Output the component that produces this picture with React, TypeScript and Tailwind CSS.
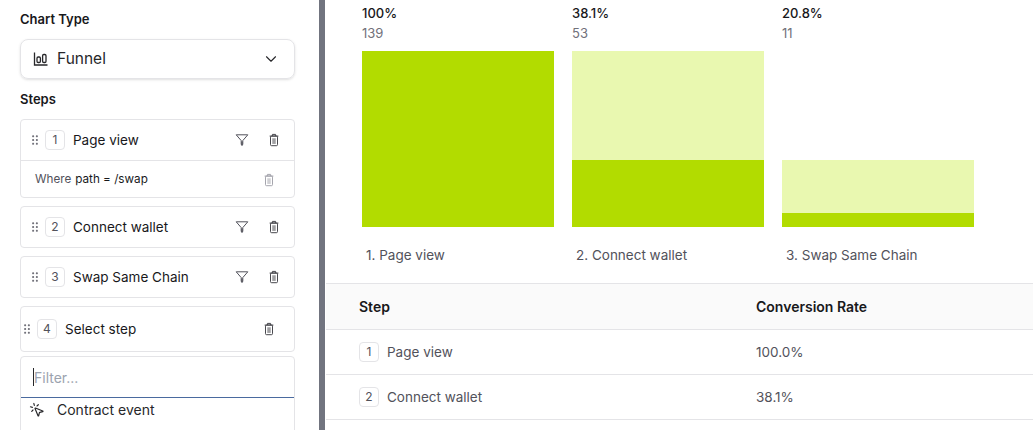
import { ChevronDown, MousePointerClick } from 'lucide-react';
import { RxDragHandleDots2 } from 'react-icons/rx';

const bars = [
  { percent: '100%', count: '139', label: '1. Page view', empty: 0, light: 0, solid: 176 },
  { percent: '38.1%', count: '53', label: '2. Connect wallet', empty: 0, light: 109, solid: 67 },
  { percent: '20.8%', count: '11', label: '3. Swap Same Chain', empty: 109, light: 53, solid: 14 },
];

function TrashIcon({ className }: { className: string }) {
  return (
    <svg viewBox="0 0 14 16" className={className} fill="none" stroke="currentColor" strokeWidth="1.1">
      <path d="M2 3.5h10M5.2 3.3V1.6h3.6v1.7" />
      <rect x="3" y="3.5" width="8" height="11" rx="1.2" />
      <rect x="5" y="6" width="4" height="6.5" fill="currentColor" stroke="none" opacity="0.5" />
    </svg>
  );
}

function FilterIcon() {
  return (
    <svg viewBox="0 0 14 14" className="ml-auto h-3.5 w-3.5 text-[#52525b]" fill="none" stroke="currentColor" strokeWidth="1">
      <path d="M1.2 1.8h11.6L7.8 7.6v3.6L7 12.6 6.2 11.2V7.6z" strokeLinejoin="round" />
      <path d="M7 8.5v3.5" strokeWidth="1.4" />
    </svg>
  );
}

function StepNumber({ n }: { n: number }) {
  return (
    <span className="flex h-5 w-5 shrink-0 items-center justify-center rounded border border-[#e4e4e7] text-xs text-[#52525b]">
      {n}
    </span>
  );
}

function StepRow({ n, name }: { n: number; name: string }) {
  return (
    <div className="flex h-10 items-center pl-[7px] pr-[13px]">
      <RxDragHandleDots2 className="h-3.5 w-3.5 text-[#71717a]" />
      <div className="ml-[3px]"><StepNumber n={n} /></div>
      <span className="ml-2 text-[13.5px] text-[#18181b]">{name}</span>
      <FilterIcon />
      <TrashIcon className="ml-[18px] h-3.5 w-3.5 text-[#3f3f46]" />
    </div>
  );
}

export default function App() {
  return (
    <div className="flex h-[430px] w-[1033px] overflow-hidden bg-white font-['Inter','Liberation_Sans',sans-serif]">
      <aside className="w-[319px] shrink-0 px-5 pt-[11px]">
        <h3 className="text-[13px] leading-4 font-semibold text-[#18181b]">Chart Type</h3>
        <div className="mt-3 flex h-10 w-[275px] items-center rounded-lg border border-[#e4e4e7] pl-[12px] pr-[14px] shadow-sm">
          <svg viewBox="0 0 16 16" className="h-4 w-4 text-[#27272a]" fill="none" stroke="currentColor" strokeWidth="1.3">
            <path d="M1.5 1.5v12.5h13" />
            <rect x="4" y="6" width="3.4" height="5.5" rx="1.2" />
            <rect x="9.6" y="3.5" width="3.4" height="8" rx="1.2" />
          </svg>
          <span className="ml-2 text-[15.5px] text-[#27272a]">Funnel</span>
          <ChevronDown className="ml-auto h-[18px] w-[18px] text-[#27272a]" strokeWidth={1.5} />
        </div>

        <h3 className="mt-3 text-[13px] leading-4 font-semibold text-[#18181b]">Steps</h3>
        <div className="mt-3 flex w-[275px] flex-col">
          <div className="rounded border border-[#e4e4e7]">
            <StepRow n={1} name="Page view" />
            <div className="flex h-[37px] items-center border-t border-[#e4e4e7] pl-[14px] pr-[18px] pt-px text-[11.7px]">
              <span className="text-[#52525b]">Where</span>
              <span className="ml-1 text-[#18181b]">path = /swap</span>
              <TrashIcon className="ml-auto h-3.5 w-3.5 text-[#a1a1aa]" />
            </div>
          </div>
          <div className="mt-2 rounded border border-[#e4e4e7]"><StepRow n={2} name="Connect wallet" /></div>
          <div className="mt-2 rounded border border-[#e4e4e7]"><StepRow n={3} name="Swap Same Chain" /></div>
          <div className="mt-2 flex h-[46px] items-center rounded border border-[#e4e4e7] pr-[18px]">
            <RxDragHandleDots2 className="-ml-px h-3.5 w-3.5 text-[#71717a]" />
            <div className="ml-[3px]"><StepNumber n={4} /></div>
            <span className="ml-2 text-[13.5px] text-[#18181b]">Select step</span>
            <TrashIcon className="ml-auto h-3.5 w-3.5 text-[#3f3f46]" />
          </div>
          <div className="mt-1 h-[90px] rounded border border-[#e4e4e7]">
            <div className="flex h-[41px] items-center border-b border-[#4a6a9f] pl-3 text-sm">
              <span className="h-[18px] w-px bg-[#27272a]" />
              <span className="pt-0.5 text-[#9ca3af]">Filter...</span>
            </div>
            <div className="flex h-6 items-center pl-[8px] text-sm text-[#27272a]">
              <MousePointerClick className="h-4 w-4" strokeWidth={1.75} />
              <span className="ml-[12px]">Contract event</span>
            </div>
          </div>
        </div>
      </aside>

      <div className="w-1.5 shrink-0 bg-[#71747f]" />

      <main className="ml-px min-w-0 flex-1">
        <div className="flex h-[283px] gap-[18px] pl-9 pt-[5px]">
          {bars.map((bar) => (
            <div key={bar.label} className="w-[192px]">
              <div className="text-[13px] leading-4 font-medium text-[#18181b]">{bar.percent}</div>
              <div className="mt-1 text-[13px] leading-4 text-[#71717a]">{bar.count}</div>
              <div className="mt-[10px] flex h-[176px] flex-col">
                <div style={{ height: bar.empty }} />
                <div className="bg-[#e9f8b0]" style={{ height: bar.light }} />
                <div className="bg-[#b2dc00]" style={{ height: bar.solid }} />
              </div>
              <div className="mt-5 pl-1 text-[13.5px] leading-4 text-[#52525b]">{bar.label}</div>
            </div>
          ))}
        </div>

        <div className="flex h-[47px] items-center border-y border-[#e4e4e7] bg-[#fafafa] pl-[33px] text-sm font-semibold text-[#18181b]">
          <span className="w-[397px]">Step</span>
          <span>Conversion Rate</span>
        </div>
        {[
          { n: 1, name: 'Page view', rate: '100.0%' },
          { n: 2, name: 'Connect wallet', rate: '38.1%' },
        ].map((row) => (
          <div key={row.n} className="flex h-[45px] items-center border-b border-[#e4e4e7] pl-[33px] text-[13.5px] text-[#52525b]">
            <div className="flex w-[397px] items-center gap-2">
              <StepNumber n={row.n} />
              <span className="pt-px">{row.name}</span>
            </div>
            <span className="pt-px">{row.rate}</span>
          </div>
        ))}
      </main>
    </div>
  );
}
